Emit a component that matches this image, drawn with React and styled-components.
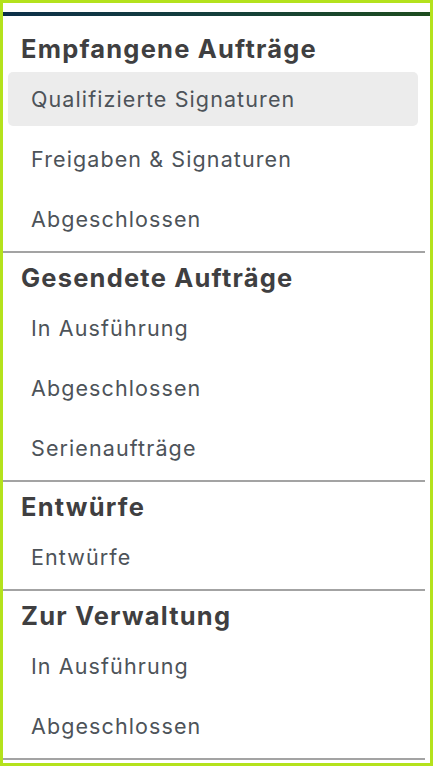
import React from 'react';
import styled, { createGlobalStyle } from 'styled-components';

const GlobalStyle = createGlobalStyle`
  html, body {
    margin: 0;
    padding: 0;
    background: #ffffff;
  }
  * {
    box-sizing: border-box;
  }
`;

// styles
const Frame = styled.div`
  width: 433px;
  height: 766px;
  border: 3px solid #b4e21c;
  background: #ffffff;
  overflow: hidden;
  font-family: Inter, 'Open Sans', 'Liberation Sans', sans-serif;
`;
const Nav = styled.nav`
  margin-top: 9px;
  border-top: 4px solid transparent;
  border-image: linear-gradient(90deg, #0d3049, #143f3c 50%, #1e4d1f) 1;
`;
const Section = styled.section`
  padding-bottom: 2px;
  border-bottom: 2px solid #a3a3a3;
  margin-right: 5px;
`;
const Heading = styled.h2`
  margin: 0;
  padding: ${props => (props.first ? '18px' : '10px')} 0 5px 18px;
  font-size: 25.5px;
  line-height: 30px;
  font-weight: 700;
  letter-spacing: 1.2px;
  color: #3f3f41;
`;
const List = styled.ul`
  display: flex;
  flex-direction: column;
  gap: 6px;
  list-style: none;
  margin: 0;
  padding: 3px 0;
`;
const Item = styled.li`
  display: flex;
  align-items: center;
  height: 54px;
  margin: 0 7px 0 5px;
  padding-left: 23px;
  font-size: 21.5px;
  letter-spacing: 1.1px;
  color: #4d5359;
  border-radius: 5px;
  background: ${props => (props.active ? '#ececec' : 'transparent')};
`;

const sections = [
  {
    title: 'Empfangene Aufträge',
    items: ['Qualifizierte Signaturen', 'Freigaben & Signaturen', 'Abgeschlossen'],
  },
  {
    title: 'Gesendete Aufträge',
    items: ['In Ausführung', 'Abgeschlossen', 'Serienaufträge'],
  },
  { title: 'Entwürfe', items: ['Entwürfe'] },
  { title: 'Zur Verwaltung', items: ['In Ausführung', 'Abgeschlossen'] },
];

export default function App() {
  return (
    <>
      <GlobalStyle />
      <Frame>
        <Nav>
          {sections.map((section, i) => (
            <Section key={section.title}>
              <Heading first={i === 0}>{section.title}</Heading>
              <List>
                {section.items.map((label, j) => (
                  <Item key={label} active={i === 0 && j === 0}>
                    {label}
                  </Item>
                ))}
              </List>
            </Section>
          ))}
        </Nav>
      </Frame>
    </>
  );
}
